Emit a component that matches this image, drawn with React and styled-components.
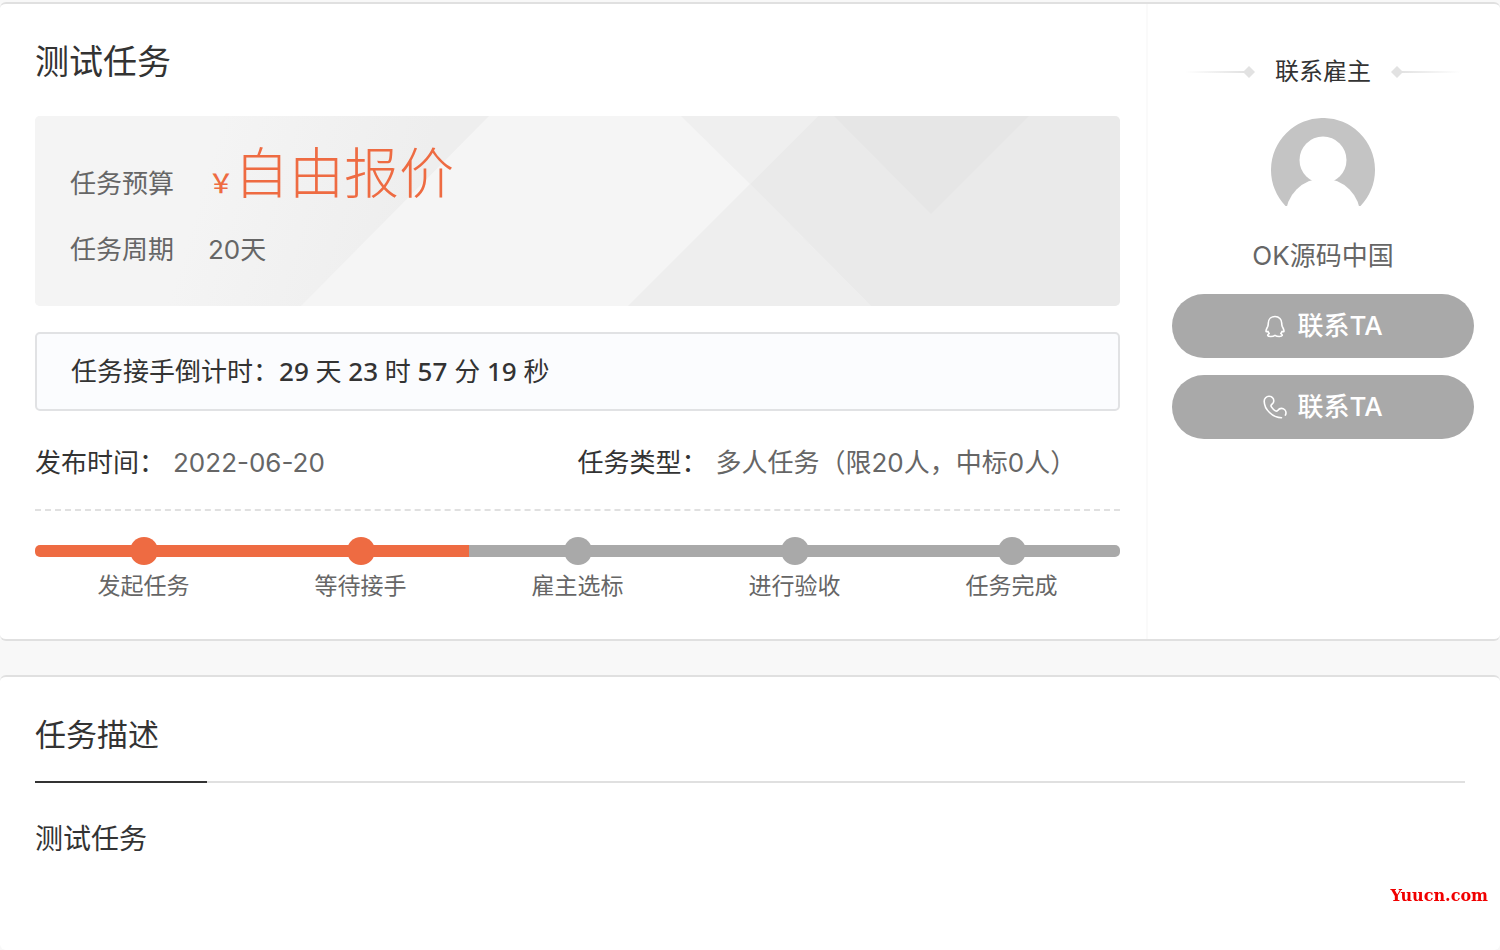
import React from "react"
import styled, { createGlobalStyle } from "styled-components"

const GlobalStyle = createGlobalStyle`
  * {
    box-sizing: border-box;
  }
  body {
    margin: 0;
    background: #f8f8f8;
    color: #333;
    font-family: Inter, "Noto Sans CJK SC", sans-serif;
    font-size: 26px;
    line-height: 38px;
  }
  h1, h2, h3, p, dl, dt, dd, ol {
    margin: 0;
    padding: 0;
    font-weight: 400;
  }
`

const Page = styled.div`
  display: flex;
  flex-direction: column;
  gap: 34px;
  min-height: 100vh;
  padding-top: 2px;
`

const TaskCard = styled.section`
  display: flex;
  background: #fff;
  border: solid #e0e0e0;
  border-width: 2px 0;
  border-radius: 6px;
`

const TaskMain = styled.div`
  flex: 1;
  min-width: 0;
  padding: 34px 26px 37px 35px;
`

const Title = styled.h1`
  font-size: 34px;
  line-height: 48px;
`

const Banner = styled.div`
  position: relative;
  margin-top: 30px;
  padding: 17px 35px 37px;
  border-radius: 5px;
  overflow: hidden;
  color: #666;
`

const BannerArt = styled.svg`
  position: absolute;
  inset: 0;
  width: 100%;
  height: 100%;
`

const BannerList = styled.dl`
  position: relative;
  display: flex;
  flex-direction: column;
  gap: 26px;
`

const BannerRow = styled.div`
  display: flex;
  align-items: baseline;
  gap: 34px;
`

const Price = styled.dd`
  display: flex;
  align-items: baseline;
  color: #ee6b42;

  span {
    font-weight: 500;
  }
  strong {
    font-family: "Noto Sans CJK SC", sans-serif;
    font-size: 55px;
    font-weight: 300;
    line-height: 72px;
  }
`

const Countdown = styled.p`
  margin-top: 26px;
  padding: 18px 34px 19px;
  border: 2px solid #e1e2e4;
  border-radius: 5px;
  background: #fbfcfe;
  font-family: "Noto Sans", "Noto Sans CJK SC", sans-serif;

  b {
    font-weight: 500;
  }
`

const Meta = styled.dl`
  display: grid;
  grid-template-columns: 1fr 1fr;
  margin-top: 33px;
  padding-bottom: 27px;
  border-bottom: 2px dashed #e0e0e0;
`

const MetaItem = styled.div`
  display: flex;
  gap: 8px;

  dd {
    color: #666;
  }
`

const Steps = styled.ol`
  display: grid;
  grid-template-columns: repeat(5, 1fr);
  margin-top: 26px;
  list-style: none;
`

const Step = styled.li`
  display: flex;
  flex-direction: column;
  align-items: center;
  gap: 5px;
  color: #666;
  font-size: 23px;
  line-height: 32px;
  --tone: ${(p) => (p.$done ? "#ee6b42" : "#a9a9a9")};

  &:first-child > span {
    border-radius: 5px 0 0 5px;
  }
  &:last-child > span {
    border-radius: 0 5px 5px 0;
  }
`

const StepBar = styled.span`
  display: flex;
  align-items: center;
  justify-content: center;
  width: 100%;
  height: 12px;
  margin: 8px 0;
  background: var(--tone);

  &::before {
    content: "";
    flex: none;
    width: 28px;
    height: 28px;
    border-radius: 50%;
    background: var(--tone);
  }
`

const Employer = styled.aside`
  display: flex;
  flex-direction: column;
  align-items: center;
  flex: none;
  width: 354px;
  padding: 50px 26px 0 24px;
  border-left: 2px solid #fafafa;
`

const EmployerHead = styled.div`
  display: flex;
  align-items: center;
  gap: 20px;

  h2 {
    font-size: 24px;
    line-height: 36px;
  }
`

const Ornament = styled.svg`
  width: 70px;
  height: 12px;
  transform: ${(p) => (p.$flip ? "scaleX(-1)" : "none")};
`

const Avatar = styled.svg`
  width: 104px;
  height: 104px;
  margin-top: 28px;
`

const Name = styled.p`
  margin-top: 15px;
  color: #666;
`

const Contacts = styled.div`
  display: flex;
  flex-direction: column;
  gap: 17px;
  width: 100%;
  margin-top: 19px;
`

const ContactButton = styled.button`
  display: flex;
  align-items: center;
  justify-content: center;
  gap: 10px;
  height: 64px;
  padding: 0;
  border: 0;
  border-radius: 32px;
  background: #a9a9a9;
  color: #fff;
  font: inherit;
  font-weight: 500;
  cursor: pointer;

  svg {
    width: 24px;
    height: 24px;
    fill: none;
    stroke: #fff;
    stroke-width: 1.6;
    stroke-linecap: round;
    stroke-linejoin: round;
  }
`

const DetailCard = styled.section`
  flex: 1;
  padding: 36px 35px;
  background: #fff;
  border-top: 2px solid #e0e0e0;
  border-radius: 6px;
`

const DetailHead = styled.div`
  display: flex;
  box-shadow: inset 0 -2px #e0e0e0;

  h2 {
    min-width: 172px;
    padding-bottom: 24px;
    border-bottom: 2px solid #333;
    font-size: 31px;
    line-height: 44px;
  }
`

const DetailText = styled.p`
  margin-top: 36px;
  font-size: 28px;
  line-height: 40px;
`

const Watermark = styled.span`
  position: fixed;
  right: 12px;
  bottom: 42px;
  color: #f00000;
  font-family: "DejaVu Serif", serif;
  font-size: 16px;
  font-weight: 700;
  line-height: 24px;
`

const steps = [
  { name: "发起任务", done: true },
  { name: "等待接手", done: true },
  { name: "雇主选标" },
  { name: "进行验收" },
  { name: "任务完成" },
]

const left = [
  [29, "天"],
  [23, "时"],
  [57, "分"],
  [19, "秒"],
]

function BannerBackground() {
  return (
    <BannerArt viewBox="0 0 1085 190" preserveAspectRatio="none" aria-hidden="true">
      <defs>
        <linearGradient id="shade" gradientUnits="userSpaceOnUse" x1="170" y1="60" x2="370" y2="120">
          <stop offset="0" stopColor="#f4f4f4" />
          <stop offset="1" stopColor="#eeeeee" />
        </linearGradient>
      </defs>
      <path fill="#f5f5f5" d="M0 0h1085v190H0z" />
      <path fill="url(#shade)" d="M0 0h454L266 190H0z" />
      <path fill="#efefef" d="M646 0h137l-68 68z" />
      <path fill="#eeeeee" d="M715 68l121 122H593z" />
      <path fill="#eaeaea" d="M783 0h302v190H836L715 68z" />
      <path fill="#e6e6e6" d="M799 0h195l-98 98z" />
    </BannerArt>
  )
}

function Line({ flip, id }) {
  return (
    <Ornament viewBox="0 0 70 12" $flip={flip} aria-hidden="true">
      <defs>
        <linearGradient id={id}>
          <stop offset="0" stopColor="#e2e2e2" stopOpacity="0" />
          <stop offset="1" stopColor="#e2e2e2" />
        </linearGradient>
      </defs>
      <path fill={`url(#${id})`} d="M0 5h60v2H0z" />
      <path fill="#e2e2e2" d="M64 0l6 6-6 6-6-6z" />
    </Ornament>
  )
}

export default function App() {
  return (
    <>
      <GlobalStyle />
      <Page>
        <TaskCard>
          <TaskMain>
            <Title>测试任务</Title>
            <Banner>
              <BannerBackground />
              <BannerList>
                <BannerRow>
                  <dt>任务预算</dt>
                  <Price>
                    <span>￥</span>
                    <strong>自由报价</strong>
                  </Price>
                </BannerRow>
                <BannerRow>
                  <dt>任务周期</dt>
                  <dd>20天</dd>
                </BannerRow>
              </BannerList>
            </Banner>
            <Countdown>
              任务接手倒计时：
              {left.map(([n, unit], i) => (
                <React.Fragment key={unit}>
                  {i > 0 && " "}
                  <b>{n}</b> {unit}
                </React.Fragment>
              ))}
            </Countdown>
            <Meta>
              <MetaItem>
                <dt>发布时间：</dt>
                <dd>2022-06-20</dd>
              </MetaItem>
              <MetaItem>
                <dt>任务类型：</dt>
                <dd>多人任务（限20人，中标0人）</dd>
              </MetaItem>
            </Meta>
            <Steps>
              {steps.map((s) => (
                <Step key={s.name} $done={s.done}>
                  <StepBar />
                  {s.name}
                </Step>
              ))}
            </Steps>
          </TaskMain>
          <Employer>
            <EmployerHead>
              <Line id="fade-left" />
              <h2>联系雇主</h2>
              <Line id="fade-right" flip />
            </EmployerHead>
            <Avatar viewBox="0 0 104 104" role="img" aria-label="OK源码中国">
              <path fill="#c4c4c4" d="M14.5 88a52 52 0 1 1 75 0z" />
              <circle cx="52" cy="42" r="23.5" fill="#fff" />
              <circle cx="52" cy="98" r="37.5" fill="#fff" />
            </Avatar>
            <Name>OK源码中国</Name>
            <Contacts>
              <ContactButton type="button">
                <svg viewBox="0 0 24 24" aria-hidden="true">
                  <path d="M12 2.500c-4.200 0-6.700 3-6.700 6.600 0 1.300-.1 2.400-.6 3.500-1 1.900-1.800 3.100-1.700 4.500.1.900.9.900 1.900.2.300.9.700 1.600 1.300 2.300-1 .5-1.700 1.200-1.400 2 .4 1.100 4.900 1.400 7.200-.2 2.300 1.600 6.800 1.300 7.200.2.300-.8-.4-1.500-1.400-2 .6-.7 1-1.400 1.300-2.300 1 .7 1.800.7 1.900-.2.100-1.400-.7-2.600-1.700-4.500-.5-1.100-.6-2.200-.6-3.500 0-3.600-2.500-6.600-6.700-6.600z" />
                </svg>
                联系TA
              </ContactButton>
              <ContactButton type="button">
                <svg viewBox="0 0 24 24" aria-hidden="true">
                  <path d="M18.500 22.700C9.500 22.500 1.300 14.500 1.200 6.200 1.200 3.500 3.400 1.300 6 1.300c2.700 0 4.800 2 4.800 4.600 0 1.700-.9 2.700-2.100 3.600-.9.700-.9 1.500-.3 2.400 1.100 1.700 2.400 3 4 4 .9.500 1.700.4 2.300-.5.9-1.200 2.100-2 3.800-2 2.500 0 4.500 2 4.500 4.400 0 .9-.2 1.600-.6 2.300" />
                </svg>
                联系TA
              </ContactButton>
            </Contacts>
          </Employer>
        </TaskCard>
        <DetailCard>
          <DetailHead>
            <h2>任务描述</h2>
          </DetailHead>
          <DetailText>测试任务</DetailText>
        </DetailCard>
      </Page>
      <Watermark>Yuucn.com</Watermark>
    </>
  )
}
